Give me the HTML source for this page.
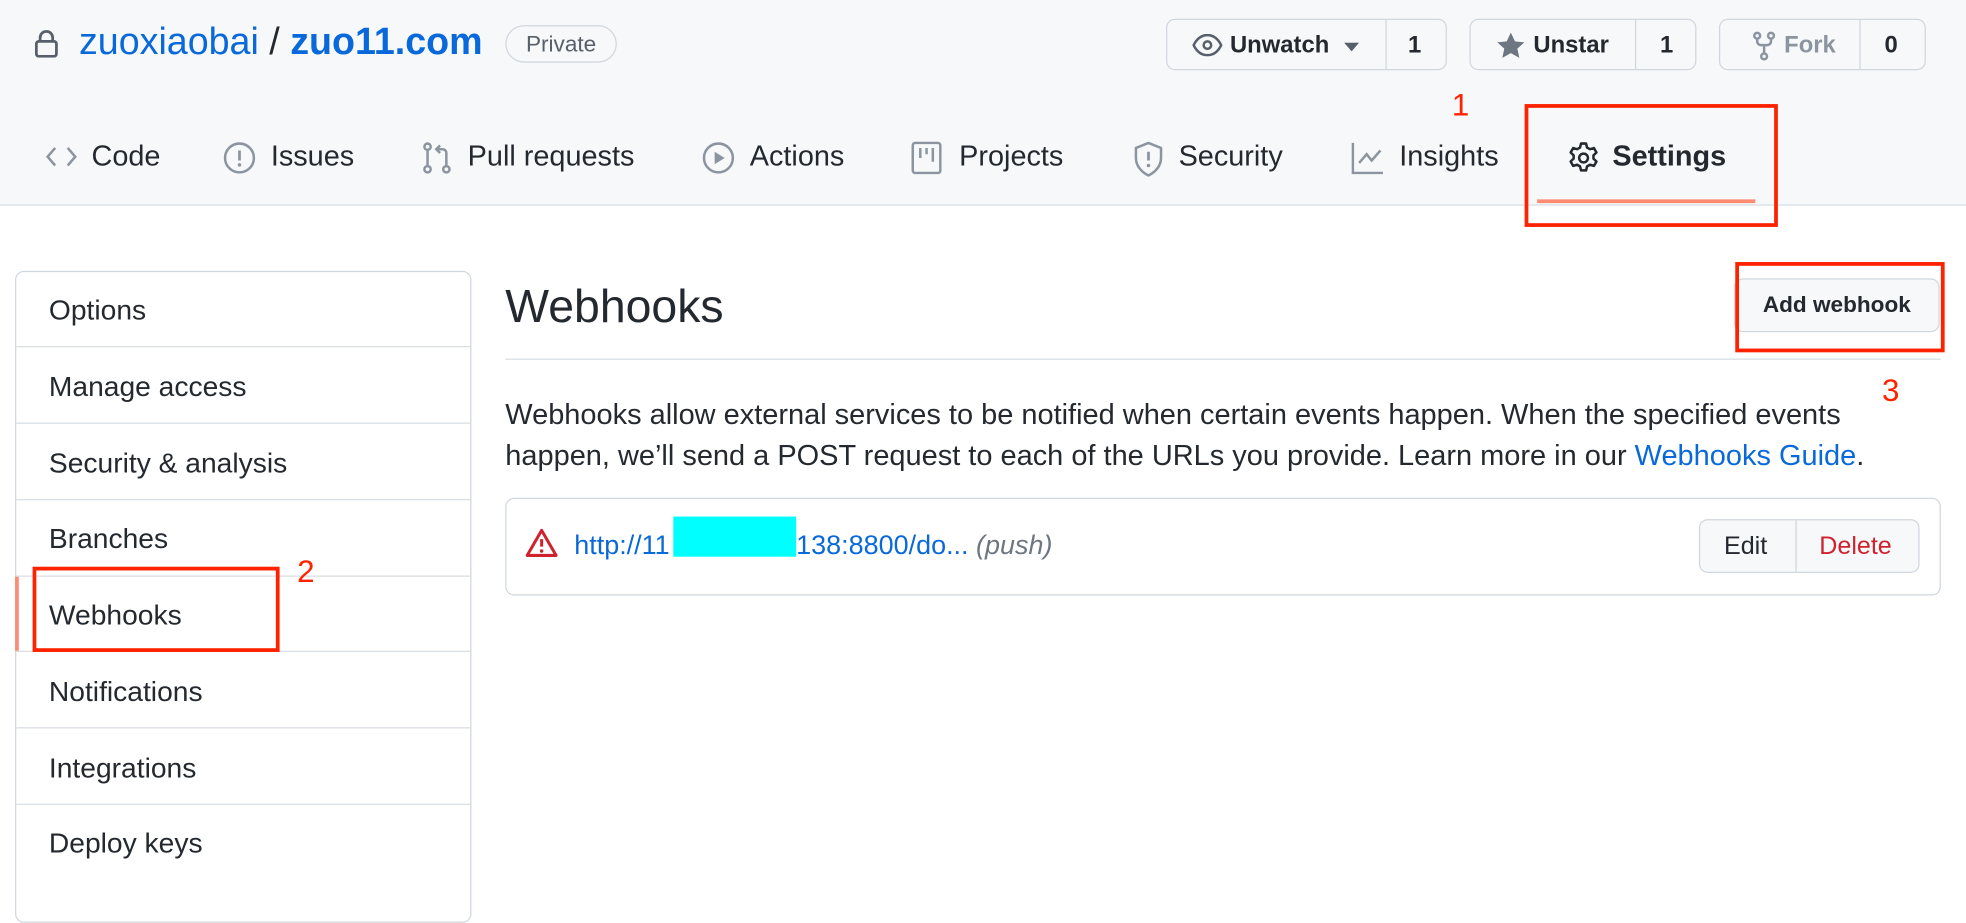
<!DOCTYPE html>
<html><head><meta charset="utf-8"><style>
html,body{margin:0;padding:0;width:1966px;height:876px;overflow:hidden;background:#fff}
#w{position:absolute;left:0;top:0;width:1568px;height:699px;transform:scale(1.2538);transform-origin:0 0;font-family:"Liberation Sans",sans-serif;color:#24292f}
.a{position:absolute;white-space:nowrap}
.hdr{position:absolute;left:0;top:0;width:1568px;height:163px;background:#f6f8fa;border-bottom:1px solid #d8dee4}
.btn{position:absolute;top:15px;height:41px;border:1px solid #d0d7de;border-radius:7px;background:#f6f8fa;box-sizing:border-box;font-size:19px;font-weight:bold}
.btn .d{position:absolute;top:0;bottom:0;width:1px;background:#d0d7de}
.tab{position:absolute;top:111px;font-size:23px;color:#24292f}
.ic{position:absolute;top:113px}
.side{position:absolute;left:12px;top:216px;width:364px;height:520px;border:1px solid #d0d7de;border-radius:7px;box-sizing:border-box}
.si{position:absolute;left:26px;font-size:22.5px}
.sl{position:absolute;left:0;right:0;height:1px;background:#d8dee4}
.red{position:absolute;border:3px solid #ff2200;box-sizing:border-box}
.rn{position:absolute;color:#ff2200;font-size:25px}
</style></head><body><div id="w">
<div class="hdr"></div>
<svg class="a" style="left:27px;top:24px" width="20" height="22" viewBox="0 0 20 22"><rect x="2" y="9" width="16" height="12" rx="2" fill="none" stroke="#57606a" stroke-width="2.2"/><path d="M5 9V6a5 5 0 0 1 10 0v3" fill="none" stroke="#57606a" stroke-width="2.2"/></svg>
<div class="a" style="left:63px;top:17px;font-size:30px;color:#0969da">zuoxiaobai <span style="color:#24292f">/</span> <b>zuo11.com</b></div>
<div class="a" style="left:403px;top:20px;width:89px;height:30px;border:1px solid #d0d7de;border-radius:16px;box-sizing:border-box;font-size:18px;color:#57606a;text-align:center;line-height:28px">Private</div>

<div class="btn" style="left:930px;width:224px"><svg class="a" style="left:20px;top:11px" width="24" height="18" viewBox="0 0 24 18"><path d="M1 9C4 3 8 1 12 1s8 2 11 8c-3 6-7 8-11 8S4 15 1 9z" fill="none" stroke="#57606a" stroke-width="2"/><circle cx="12" cy="9" r="3" fill="none" stroke="#57606a" stroke-width="2"/></svg><span class="a" style="left:50px;top:10px">Unwatch</span><svg class="a" style="left:141px;top:18px" width="12" height="7"><path d="M0 0h12L6 7z" fill="#57606a"/></svg><div class="d" style="left:174px"></div><span class="a" style="left:192px;top:10px">1</span></div>
<div class="btn" style="left:1172px;width:181px"><svg class="a" style="left:20px;top:9px" width="24" height="23" viewBox="0 0 24 23"><path d="M12 1l3.3 7 7.5.8-5.6 5 1.6 7.4L12 17.4l-6.8 3.8 1.6-7.4-5.6-5 7.5-.8z" fill="#6e7781"/></svg><span class="a" style="left:50px;top:10px">Unstar</span><div class="d" style="left:131px"></div><span class="a" style="left:151px;top:10px">1</span></div>
<div class="btn" style="left:1371px;width:165px;color:#8c959f"><svg class="a" style="left:26px;top:9px" width="18" height="24" viewBox="0 0 18 24"><g fill="none" stroke="#8c959f" stroke-width="2"><circle cx="3.5" cy="3.5" r="2.3"/><circle cx="14.5" cy="3.5" r="2.3"/><circle cx="9" cy="20" r="2.3"/><path d="M3.5 6v2a3 3 0 0 0 3 3h5a3 3 0 0 0 3-3V6M9 11v6.5"/></g></svg><span class="a" style="left:51px;top:10px">Fork</span><div class="d" style="left:111px"></div><span class="a" style="left:131px;top:10px;color:#24292f">0</span></div>

<svg class="ic" style="left:36px;top:115px" width="26" height="20" viewBox="0 0 26 20"><path d="M8 3L2 10l6 7M18 3l6 7-6 7" fill="none" stroke="#8c959f" stroke-width="2"/></svg><div class="tab" style="left:73px">Code</div>
<svg class="ic" style="left:178px" width="26" height="26" viewBox="0 0 26 26"><circle cx="13" cy="13" r="11.5" fill="none" stroke="#8c959f" stroke-width="2"/><path d="M13 7v8" stroke="#8c959f" stroke-width="2.2"/><circle cx="13" cy="18.5" r="1.4" fill="#8c959f"/></svg><div class="tab" style="left:216px">Issues</div>
<svg class="ic" style="left:337px" width="24" height="26" viewBox="0 0 24 26"><g fill="none" stroke="#8c959f" stroke-width="2"><circle cx="4" cy="4" r="2.5"/><circle cx="4" cy="22" r="2.5"/><circle cx="19" cy="22" r="2.5"/><path d="M4 7v12M19 19V9a3 3 0 0 0-3-3h-4M14 3l-3 3 3 3"/></g></svg><div class="tab" style="left:373px">Pull requests</div>
<svg class="ic" style="left:560px" width="26" height="26" viewBox="0 0 26 26"><circle cx="13" cy="13" r="11.5" fill="none" stroke="#8c959f" stroke-width="2"/><path d="M10 8v10l8-5z" fill="#8c959f"/></svg><div class="tab" style="left:598px">Actions</div>
<svg class="ic" style="left:727px" width="24" height="26" viewBox="0 0 24 26"><rect x="1" y="1" width="22" height="24" rx="2" fill="none" stroke="#8c959f" stroke-width="2"/><path d="M7 5v8M12 5v5M17 5v11" stroke="#8c959f" stroke-width="2"/></svg><div class="tab" style="left:765px">Projects</div>
<svg class="ic" style="left:904px" width="24" height="28" viewBox="0 0 24 28"><path d="M12 1L2 5v8c0 6 4 11 10 14 6-3 10-8 10-14V5z" fill="none" stroke="#8c959f" stroke-width="2"/><path d="M12 8v7" stroke="#8c959f" stroke-width="2.2"/><circle cx="12" cy="19" r="1.4" fill="#8c959f"/></svg><div class="tab" style="left:940px">Security</div>
<svg class="ic" style="left:1078px" width="26" height="26" viewBox="0 0 26 26"><path d="M1 1v24h24" fill="none" stroke="#8c959f" stroke-width="2"/><path d="M6 17l6-7 4 5 7-8" fill="none" stroke="#8c959f" stroke-width="2"/></svg><div class="tab" style="left:1116px">Insights</div>
<svg class="ic" style="left:1250px" width="26" height="26" viewBox="0 0 26 26"><path d="M11 1.5h4l.8 3.2 2.3 1.3 3.2-.9 2 3.5-2.4 2.3v2.6l2.4 2.3-2 3.5-3.2-.9-2.3 1.3-.8 3.2h-4l-.8-3.2-2.3-1.3-3.2.9-2-3.5 2.4-2.3v-2.6L2.7 8.6l2-3.5 3.2.9 2.3-1.3z" fill="none" stroke="#24292f" stroke-width="2" stroke-linejoin="round"/><circle cx="13" cy="13" r="3.5" fill="none" stroke="#24292f" stroke-width="2"/></svg><div class="tab" style="left:1286px;font-weight:bold">Settings</div>
<div class="a" style="left:1226px;top:159px;width:174px;height:3px;background:#fd8c73"></div>
<div class="rn" style="left:1158px;top:70px">1</div>
<div class="red" style="left:1216px;top:83px;width:202px;height:98px"></div>

<div class="side">
<div class="si" style="top:18px">Options</div><div class="sl" style="top:59px"></div>
<div class="si" style="top:79px">Manage access</div><div class="sl" style="top:120px"></div>
<div class="si" style="top:140px">Security &amp; analysis</div><div class="sl" style="top:181px"></div>
<div class="si" style="top:200px">Branches</div><div class="sl" style="top:242px"></div>
<div class="si" style="top:261px">Webhooks</div><div class="sl" style="top:302px"></div>
<div class="si" style="top:322px">Notifications</div><div class="sl" style="top:363px"></div>
<div class="si" style="top:383px">Integrations</div><div class="sl" style="top:424px"></div>
<div class="si" style="top:443px">Deploy keys</div>
<div class="a" style="left:-1px;top:243px;width:3px;height:59px;background:#fd8c73"></div>
</div>
<div class="red" style="left:26px;top:452px;width:197px;height:68px"></div>
<div class="rn" style="left:237px;top:442px">2</div>

<div class="a" style="left:403px;top:224px;font-size:37px">Webhooks</div>
<div class="a" style="left:1383px;top:222px;width:164px;height:43px;border:1px solid #d0d7de;border-radius:7px;background:#f6f8fa;box-sizing:border-box;font-size:18px;font-weight:bold;text-align:center;line-height:41px">Add webhook</div>
<div class="red" style="left:1384px;top:209px;width:167px;height:72px"></div>
<div class="rn" style="left:1501px;top:298px">3</div>
<div class="a" style="left:403px;top:286px;width:1145px;height:1px;background:#d8dee4"></div>
<div class="a" style="left:403px;top:314px;font-size:23.1px;line-height:33px">Webhooks allow external services to be notified when certain events happen. When the specified events<br>happen, we’ll send a POST request to each of the URLs you provide. Learn more in our <span style="color:#0969da">Webhooks Guide</span>.</div>

<div class="a" style="left:403px;top:397px;width:1145px;height:78px;border:1px solid #d0d7de;border-radius:7px;box-sizing:border-box"></div>
<svg class="a" style="left:419px;top:421px" width="26" height="24" viewBox="0 0 26 24"><path d="M13 2L1.5 22h23z" fill="none" stroke="#cf222e" stroke-width="2.4" stroke-linejoin="round"/><path d="M13 9v6" stroke="#cf222e" stroke-width="2.4"/><circle cx="13" cy="18.5" r="1.4" fill="#cf222e"/></svg>
<div class="a" style="left:458px;top:423px;font-size:21.5px;color:#0969da">http://11</div>
<div class="a" style="left:635px;top:423px;font-size:21.5px;color:#0969da">138:8800/do... <i style="color:#6e7781">(push)</i></div>
<div class="a" style="left:537px;top:412px;width:98px;height:32px;background:#00ffff"></div>
<div class="a" style="left:1355px;top:414px;width:176px;height:43px;border:1px solid #d0d7de;border-radius:7px;background:#f6f8fa;box-sizing:border-box;font-size:20px">
<span class="a" style="left:19px;top:10px">Edit</span><div class="a" style="left:76px;top:0;bottom:0;width:1px;background:#d0d7de"></div><span class="a" style="left:95px;top:10px;color:#cf222e">Delete</span></div>
</div></body></html>
